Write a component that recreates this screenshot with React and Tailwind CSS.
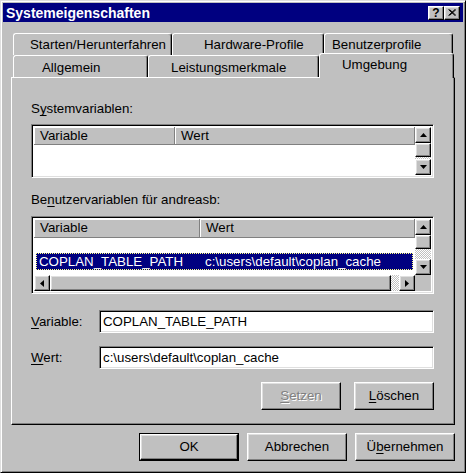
const raised =
  "border border-t-white border-l-white border-r-black border-b-black shadow-[inset_-1px_-1px_#808080,inset_1px_1px_#dfdfdf]";
const sunken =
  "border border-t-[#808080] border-l-[#808080] border-r-white border-b-white shadow-[inset_1px_1px_#000,inset_-1px_-1px_#dfdfdf]";
const checker =
  "bg-[repeating-conic-gradient(#c0c0c0_0_25%,#fff_0_50%)] bg-[length:2px_2px]";

function Arrow({ dir }) {
  const pts = {
    up: "0,4 7,4 3.5,0",
    down: "0,0 7,0 3.5,4",
    left: "4,0 4,7 0,3.5",
    right: "0,0 0,7 4,3.5",
  }[dir];
  const vertical = dir === "up" || dir === "down";
  return (
    <svg width={vertical ? 7 : 4} height={vertical ? 4 : 7} viewBox={vertical ? "0 0 7 4" : "0 0 4 7"}>
      <polygon points={pts} fill="#000" />
    </svg>
  );
}

function ScrollBtn({ dir }) {
  return (
    <div className={`${raised} w-[16px] h-[16px] flex items-center justify-center bg-[#c0c0c0] shrink-0`}>
      <Arrow dir={dir} />
    </div>
  );
}

function Tab({ label, width, pl, selected, back }) {
  return (
    <div
      className={`relative flex border-t border-l border-r border-t-white border-l-white border-r-black rounded-t-[3px] shadow-[inset_-1px_0_#808080] bg-[#c0c0c0] ${
        selected ? "h-[25px] -mt-[2px] -mb-px z-10 items-start pt-[4px]" : "h-[22px] items-center"
      } ${back ? "pt-[1px]" : "pt-[2px]"}`}
      style={{ width, paddingLeft: pl }}
    >
      {label}
    </div>
  );
}

function HeaderCell({ children, width, grow }) {
  return (
    <div
      className={`h-full flex items-center pl-[6px] border-r border-b border-r-[#808080] border-b-[#808080] shadow-[inset_1px_1px_#fff] ${
        grow ? "flex-1" : ""
      }`}
      style={width ? { width } : undefined}
    >
      {children}
    </div>
  );
}

function Button({ children, w, disabled, isDefault }) {
  const inner = (
    <div
      className={`${raised} h-full w-full flex items-center justify-center bg-[#c0c0c0] ${
        disabled ? "text-[#808080] [text-shadow:1px_1px_0_#fff]" : ""
      }`}
    >
      {children}
    </div>
  );
  if (isDefault) {
    return (
      <div className="border border-black h-[28px]" style={{ width: w }}>
        {inner}
      </div>
    );
  }
  return (
    <div className="h-[28px]" style={{ width: w }}>
      {inner}
    </div>
  );
}

export default function App() {
  return (
    <div className="w-[466px] h-[473px] bg-[#c0c0c0] border border-t-[#dfdfdf] border-l-[#dfdfdf] border-r-black border-b-black shadow-[inset_1px_1px_#fff,inset_-1px_-1px_#808080] p-[2px] font-['Liberation_Sans',Arial,sans-serif] text-[13.3px] text-black leading-none">
      {/* Titelleiste */}
      <div className="h-[19px] bg-[#000080] flex items-center justify-between pl-[3px] pr-[3px]">
        <span className="text-white font-bold text-[14px]">Systemeigenschaften</span>
        <div className="flex">
          <div className={`${raised} w-[16px] h-[14px] flex items-center justify-center bg-[#c0c0c0] font-bold text-[12px]`}>
            ?
          </div>
          <div className={`${raised} w-[16px] h-[14px] flex items-center justify-center bg-[#c0c0c0]`}>
            <svg width="8" height="7" viewBox="0 0 8 7">
              <path d="M0.5 0.5 L7 6.5 M7 0.5 L0.5 6.5 M1.5 0.5 L8 6.5 M8 0.5 L1.5 6.5" stroke="#000" strokeWidth="1" />
            </svg>
          </div>
        </div>
      </div>

      <div className="pl-[8px] pt-[11px]">
        {/* Registerkarten */}
        <div className="ml-[2px] flex h-[22px]">
          <Tab label="Starten/Herunterfahren" width={159} pl={16} back />
          <Tab label="Hardware-Profile" width={152} pl={31} back />
          <Tab label="Benutzerprofile" width={129} pl={7} back />
        </div>
        <div className="ml-[2px] flex h-[22px] items-end">
          <Tab label="Allgemein" width={135} pl={28} />
          <Tab label="Leistungsmerkmale" width={171} pl={22} />
          <Tab label="Umgebung" width={135} pl={22} selected />
        </div>

        {/* Register: Umgebung */}
        <div className="w-[444px] h-[348px] border border-t-white border-l-white border-r-black border-b-black shadow-[inset_-1px_-1px_#808080] flex flex-col pl-[19px] pr-[20px] pt-[23px]">
          <div className="h-[16px] flex items-center">
            S<span className="underline underline-offset-2">y</span>stemvariablen:
          </div>

          <div className={`${sunken} mt-[7px] h-[54px] p-[2px] flex bg-white`}>
            <div className="flex-1 flex flex-col">
              <div className="h-[18px] flex bg-[#c0c0c0]">
                <HeaderCell width={141}>Variable</HeaderCell>
                <HeaderCell grow>Wert</HeaderCell>
              </div>
            </div>
            <div className="w-[16px] flex flex-col">
              <ScrollBtn dir="up" />
              <div className={`${raised} h-[14px] bg-[#c0c0c0]`} />
              <div className={`flex-1 ${checker}`} />
              <ScrollBtn dir="down" />
            </div>
          </div>

          <div className="mt-[14px] h-[16px] flex items-center">
            Be<span className="underline underline-offset-2">n</span>utzervariablen für andreasb:
          </div>

          <div className={`${sunken} mt-[8px] h-[78px] p-[2px] flex bg-white`}>
            <div className="flex-1 flex flex-col">
              <div className="h-[19px] flex bg-[#c0c0c0]">
                <HeaderCell width={166}>Variable</HeaderCell>
                <HeaderCell grow>Wert</HeaderCell>
              </div>
              <div className="h-[15px]" />
              <div className="h-[17px] mx-[2px] bg-[#000080] border border-dotted border-[#ffff80] text-white flex items-center">
                <span className="w-[168px] pl-[2px]">COPLAN_TABLE_PATH</span>
                <span>c:\users\default\coplan_cache</span>
              </div>
              <div className="flex-1" />
              <div className="h-[16px] flex">
                <ScrollBtn dir="left" />
                <div className={`${raised} w-[341px] bg-[#c0c0c0]`} />
                <div className={`flex-1 ${checker}`} />
                <ScrollBtn dir="right" />
              </div>
            </div>
            <div className="w-[16px] flex flex-col">
              <ScrollBtn dir="up" />
              <div className={`${raised} h-[14px] bg-[#c0c0c0]`} />
              <div className={`flex-1 ${checker}`} />
              <ScrollBtn dir="down" />
              <div className="h-[16px] bg-[#c0c0c0]" />
            </div>
          </div>

          <div className="mt-[16px] flex items-center">
            <span className="w-[68px]">
              <span className="underline underline-offset-2">V</span>ariable:
            </span>
            <div className={`${sunken} flex-1 h-[23px] bg-white flex items-center pl-[3px]`}>COPLAN_TABLE_PATH</div>
          </div>

          <div className="mt-[13px] flex items-center">
            <span className="w-[68px]">
              <span className="underline underline-offset-2">W</span>ert:
            </span>
            <div className={`${sunken} flex-1 h-[23px] bg-white flex items-center pl-[3px]`}>
              c:\users\default\coplan_cache
            </div>
          </div>

          <div className="mt-[13px] flex justify-end gap-[13px]">
            <Button w={80} disabled>
              <span className="underline underline-offset-2">S</span>etzen
            </Button>
            <Button w={80}>
              <span className="underline underline-offset-2">L</span>öschen
            </Button>
          </div>
        </div>

        {/* Dialogschaltflächen */}
        <div className="w-[444px] mt-[8px] flex justify-end gap-[8px]">
          <Button w={100} isDefault>
            OK
          </Button>
          <Button w={100}>Abbrechen</Button>
          <Button w={100}>
            Ü<span className="underline underline-offset-2">b</span>ernehmen
          </Button>
        </div>
      </div>
    </div>
  );
}
